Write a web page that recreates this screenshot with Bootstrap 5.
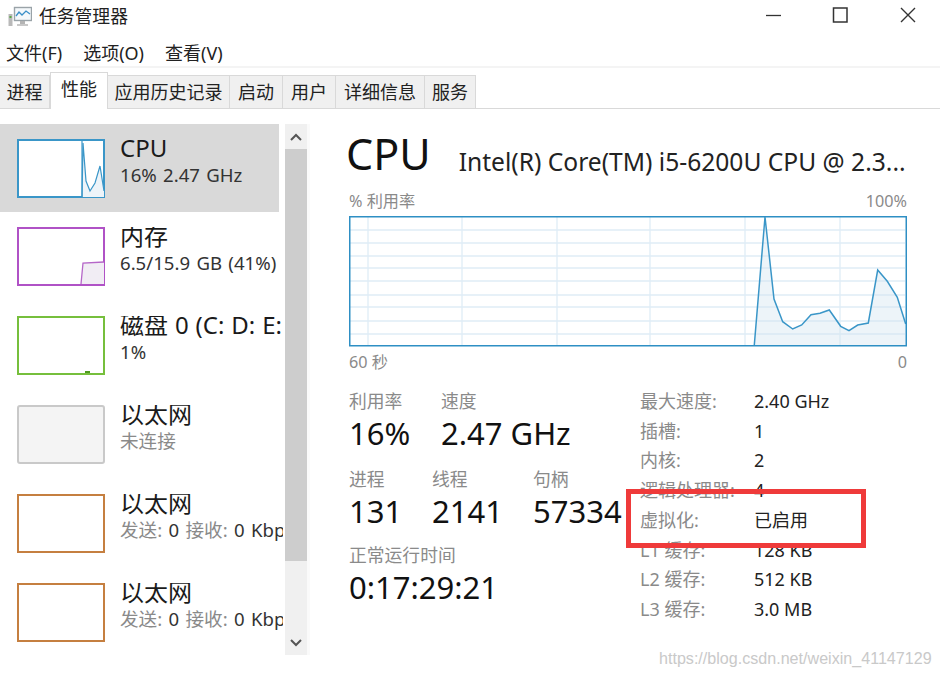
<!DOCTYPE html>
<html lang="zh-CN"><head><meta charset="utf-8"><title>任务管理器</title>
<link href="https://cdn.jsdelivr.net/npm/bootstrap@5.3.0/dist/css/bootstrap.min.css" rel="stylesheet">
<style>
html,body{height:676px;overflow:hidden;background:#fff}
body{font-family:"Noto Sans","Noto Sans CJK SC",sans-serif;color:#222;width:940px;position:relative}
svg{display:block;flex:none}
.tm-title{height:33px;padding-left:8px}
.tm-title-text{font-size:17.8px;line-height:33px;margin-left:7px}
.tm-win{margin-left:auto}
.tm-menu{height:35px;font-size:18px;padding-left:6px;gap:21px;line-height:40px;border-bottom:2px solid #f4f4f4;white-space:nowrap}
.tm-tabs{height:41px;padding-top:4px;border-bottom:1px solid #d9d9d9;margin-bottom:15px}
.tm-tab{height:33px;margin-top:3px;background:#f0f0f0;border:1px solid #d9d9d9;border-bottom:0;border-left:0;font-size:18px;line-height:32px;text-align:center;color:#222;flex:none}
.tm-tab-on{height:37px;margin-top:0;background:#fff;border-left:1px solid #d9d9d9;line-height:33px;margin-bottom:-1px;position:relative}
.tm-side{width:279px;flex:none}
.tm-item{height:89px;padding-left:17px;padding-top:15px;gap:15px}
.tm-item-first{height:88px;background:#d9d9d9}
.tm-name{font-size:24px;line-height:27px;white-space:nowrap;margin-top:-5px;color:#1a1a1a;word-spacing:.7px}
.tm-sub{font-size:18.6px;line-height:22px;white-space:nowrap;color:#333;margin-top:3px;word-spacing:1.5px}
.tm-dim{color:#8a8a8a}
.tm-clip{width:163px;overflow:hidden;flex:none}
.tm-sbar{margin-left:6px;height:531px;flex:none;background:#f0f0f0;border-right:3px solid #fafafa;box-sizing:content-box;width:22px}
.tm-thumb{height:412px;background:#cdcdcd;width:22px}
.tm-arrow{height:25px}
.tm-main{margin-left:39px;width:558px;flex:none}
.tm-h1{font-size:43px;line-height:50px;margin-top:5px;color:#111;margin-left:-3px}
.tm-h2{font-size:24.6px;line-height:30px;margin-left:28px;white-space:nowrap;color:#222;padding-top:23px}
.tm-lbl{font-size:17.8px;line-height:22px;color:#8a8a8a;white-space:nowrap}
.tm-lbl-sm{font-size:16.2px;line-height:20px;color:#8a8a8a}
.tm-chead{margin-top:10px;height:27px;padding-top:2px}
.tm-stats{margin-top:18px}
.tm-left{width:291px;flex:none}
.tm-val{font-size:31px;line-height:44px;color:#111;white-space:nowrap;margin-top:-1px}
.tm-c1{width:92px}.tm-c2{width:130px}
.tm-d1{width:83px}.tm-d2{width:101px}
.tm-gap12{margin-top:13px}.tm-gap10{margin-top:11px}
.tm-right{margin-top:-3px}
.tm-spec{font-size:18px;line-height:29.7px;color:#222;white-space:nowrap}
.tm-spec-l{width:114px;color:#8a8a8a;flex:none}
.tm-axis{margin-top:5px}
.tm-redbox{position:absolute;left:626px;top:489px;width:240px;height:59px;border:5px solid #ef3a3a}
.tm-mark{position:absolute;left:659px;top:648px;font-family:"Liberation Sans",sans-serif;font-size:16.1px;line-height:20px;color:#c9c9c9;white-space:nowrap}
</style></head><body>

<div class="tm-title d-flex align-items-center">
<svg width="24" height="22" viewBox="0 0 24 22"><rect x="0.5" y="8" width="4" height="12" fill="#b9b9b9"/><rect x="1.5" y="10" width="2" height="2" fill="#5aa845"/><rect x="6.5" y="1.5" width="17" height="13" fill="#f4f8fb" stroke="#9aa3a8" stroke-width="1.4"/><polyline points="8,10 11,6 14,9 18,5 22,8" fill="none" stroke="#3a8fc8" stroke-width="1.3"/><rect x="12" y="15" width="5" height="3" fill="#b4b4b4"/><rect x="9" y="18" width="11" height="2" fill="#c8c8c8"/></svg>
<span class="tm-title-text">任务管理器</span>
<div class="tm-win d-flex align-items-center">
<svg width="174" height="33" viewBox="766 0 174 33"><line x1="766" x2="781" y1="15.5" y2="15.5" stroke="#333" stroke-width="1.3"/><rect x="833.5" y="8" width="13.5" height="14" fill="none" stroke="#333" stroke-width="1.5"/><path d="M901 8 L915 22 M915 8 L901 22" stroke="#333" stroke-width="1.4"/></svg>
</div></div>

<div class="tm-menu d-flex"><span>文件(F)</span><span>选项(O)</span><span>查看(V)</span></div>

<div class="tm-tabs d-flex">
<div class="tm-tab" style="width:50px">进程</div>
<div class="tm-tab tm-tab-on" style="width:58px">性能</div>
<div class="tm-tab" style="width:122px">应用历史记录</div>
<div class="tm-tab" style="width:53px">启动</div>
<div class="tm-tab" style="width:53px">用户</div>
<div class="tm-tab" style="width:89px">详细信息</div>
<div class="tm-tab" style="width:51px">服务</div>
</div>

<div class="d-flex">
<div class="tm-side">
 <div class="tm-item tm-item-first d-flex">
  <svg width="88" height="59" viewBox="0 0 88 59"><rect x="1" y="1" width="86" height="57" fill="#fff" stroke="#3a96c8" stroke-width="2"/><polygon points="65,58 66,4 69,42 73,52 78,44 83,27 87,52 87,58" fill="#eef4f9"/><polyline points="65,58 66,4 69,42 73,52 78,44 83,27 87,52" fill="none" stroke="#3a96c8" stroke-width="1.2"/><line x1="65" x2="65" y1="1" y2="58" stroke="#3a96c8" stroke-width="1.2"/></svg>
  <div class="tm-clip"><div class="tm-name">CPU</div><div class="tm-sub">16% 2.47 GHz</div></div>
 </div>
 <div class="tm-item d-flex">
  <svg width="88" height="59" viewBox="0 0 88 59"><rect x="1" y="1" width="86" height="57" fill="#fff" stroke="#b052c6" stroke-width="2"/><polygon points="64,57 66,36 87,35 87,57" fill="#f1edf4"/><polyline points="64,57 66,36 87,35" fill="none" stroke="#b566c8" stroke-width="1.3"/></svg>
  <div class="tm-clip"><div class="tm-name">内存</div><div class="tm-sub">6.5/15.9 GB (41%)</div></div>
 </div>
 <div class="tm-item d-flex">
  <svg width="88" height="59" viewBox="0 0 88 59"><rect x="1" y="1" width="86" height="57" fill="#fff" stroke="#76bf3c" stroke-width="2"/><rect x="68" y="55" width="5" height="2" fill="#4f9a20"/></svg>
  <div class="tm-clip"><div class="tm-name">磁盘 0 (C: D: E:</div><div class="tm-sub">1%</div></div>
 </div>
 <div class="tm-item d-flex">
  <svg width="88" height="59" viewBox="0 0 88 59"><rect x="1" y="1" width="86" height="57" rx="2" fill="#f4f4f4" stroke="#c9c9c9" stroke-width="2"/></svg>
  <div class="tm-clip"><div class="tm-name">以太网</div><div class="tm-sub tm-dim">未连接</div></div>
 </div>
 <div class="tm-item d-flex">
  <svg width="88" height="59" viewBox="0 0 88 59"><rect x="1" y="1" width="86" height="57" fill="#fff" stroke="#c57f40" stroke-width="2"/></svg>
  <div class="tm-clip"><div class="tm-name">以太网</div><div class="tm-sub"><span class="tm-dim">发送:</span> 0 <span class="tm-dim">接收:</span> 0 Kbps</div></div>
 </div>
 <div class="tm-item d-flex">
  <svg width="88" height="59" viewBox="0 0 88 59"><rect x="1" y="1" width="86" height="57" fill="#fff" stroke="#c57f40" stroke-width="2"/></svg>
  <div class="tm-clip"><div class="tm-name">以太网</div><div class="tm-sub"><span class="tm-dim">发送:</span> 0 <span class="tm-dim">接收:</span> 0 Kbps</div></div>
 </div>
</div>

<div class="tm-sbar d-flex flex-column">
 <div class="tm-arrow d-flex align-items-center justify-content-center"><svg width="12" height="8" viewBox="0 0 12 8"><path d="M1 7 L6 2 L11 7" fill="none" stroke="#555" stroke-width="2"/></svg></div>
 <div class="tm-thumb"></div>
 <div class="flex-grow-1"></div>
 <div class="tm-arrow d-flex align-items-center justify-content-center"><svg width="12" height="8" viewBox="0 0 12 8"><path d="M1 1 L6 6 L11 1" fill="none" stroke="#555" stroke-width="2"/></svg></div>
</div>

<div class="tm-main">
 <div class="d-flex align-items-start"><div class="tm-h1">CPU</div><div class="tm-h2">Intel(R) Core(TM) i5-6200U CPU @ 2.3...</div></div>
 <div class="tm-chead d-flex justify-content-between tm-lbl-sm"><span>% 利用率</span><span>100%</span></div>
 <svg width="558" height="131" viewBox="349 217 558 131"><g stroke="#dfedf6" stroke-width="1.3"><path d="M350 231H905M350 244H905M350 257H905M350 269H905M350 282H905M350 296H905M350 308H905M350 322H905M350 335H905"/><path d="M368 218V346M462 218V346M557 218V346M650 218V346M745 218V346M840 218V346"/></g><polygon points="754.3,346 765,218 774,300 782.7,322.7 792.7,330 801.7,326 811,315.7 820,314.3 829.3,311 840.7,327.3 849,331.7 857.7,326 868.3,324 877.7,271 887.3,282.3 897.3,298.3 905.7,325 905.7,346" fill="#d3e3ef" fill-opacity=".4"/><polyline points="754.3,346 765,218 774,300 782.7,322.7 792.7,330 801.7,326 811,315.7 820,314.3 829.3,311 840.7,327.3 849,331.7 857.7,326 868.3,324 877.7,271 887.3,282.3 897.3,298.3 905.7,325" fill="none" stroke="#3a96c8" stroke-width="1.5"/><rect x="349.75" y="217.75" width="556.5" height="129" fill="none" stroke="#2e8fc4" stroke-width="1.5"/></svg>
 <div class="tm-axis d-flex justify-content-between tm-lbl-sm"><span>60 秒</span><span>0</span></div>

 <div class="tm-stats d-flex">
  <div class="tm-left">
   <div class="d-flex"><div class="tm-c1"><div class="tm-lbl">利用率</div><div class="tm-val">16%</div></div><div class="tm-c2"><div class="tm-lbl">速度</div><div class="tm-val">2.47 GHz</div></div></div>
   <div class="d-flex tm-gap12"><div class="tm-d1"><div class="tm-lbl">进程</div><div class="tm-val">131</div></div><div class="tm-d2"><div class="tm-lbl">线程</div><div class="tm-val">2141</div></div><div><div class="tm-lbl">句柄</div><div class="tm-val">57334</div></div></div>
   <div class="tm-gap10"><div class="tm-lbl">正常运行时间</div><div class="tm-val">0:17:29:21</div></div>
  </div>
  <div class="tm-right">
   <div class="tm-spec d-flex"><span class="tm-spec-l">最大速度:</span><span>2.40 GHz</span></div>
   <div class="tm-spec d-flex"><span class="tm-spec-l">插槽:</span><span>1</span></div>
   <div class="tm-spec d-flex"><span class="tm-spec-l">内核:</span><span>2</span></div>
   <div class="tm-spec d-flex"><span class="tm-spec-l">逻辑处理器:</span><span>4</span></div>
   <div class="tm-spec d-flex"><span class="tm-spec-l">虚拟化:</span><span>已启用</span></div>
   <div class="tm-spec d-flex"><span class="tm-spec-l">L1 缓存:</span><span>128 KB</span></div>
   <div class="tm-spec d-flex"><span class="tm-spec-l">L2 缓存:</span><span>512 KB</span></div>
   <div class="tm-spec d-flex"><span class="tm-spec-l">L3 缓存:</span><span>3.0 MB</span></div>
  </div>
 </div>
</div>
</div>

<div class="tm-redbox"></div>
<div class="tm-mark">https://blog.csdn.net/weixin_41147129</div>
<script src="https://cdn.jsdelivr.net/npm/bootstrap@5.3.0/dist/js/bootstrap.bundle.min.js"></script>
</body></html>
